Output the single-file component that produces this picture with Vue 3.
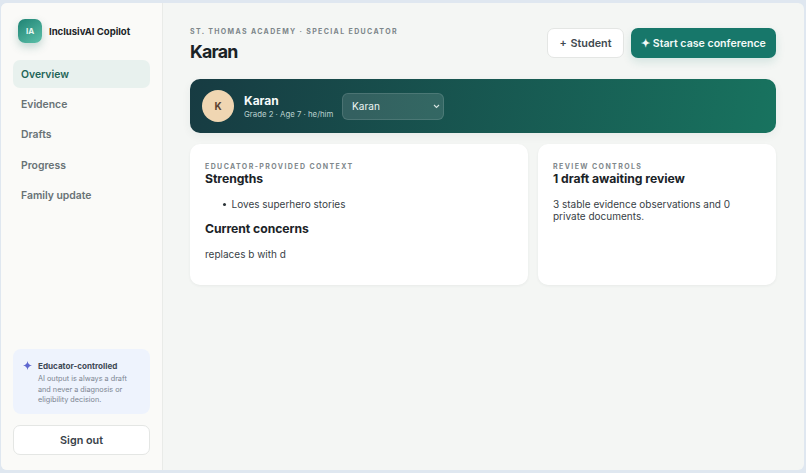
<script setup>
const nav = ['Overview', 'Evidence', 'Drafts', 'Progress', 'Family update']
</script>

<template>
  <div class="frame">
    <aside class="side">
      <div class="brand">
        <div class="logo">IA</div>
        <span class="brand-name">InclusivAI Copilot</span>
      </div>
      <nav class="nav">
        <a v-for="(n, i) in nav" :key="n" class="nav-item" :class="{ active: i === 0 }">{{ n }}</a>
      </nav>
      <div class="note">
        <svg class="note-icon" width="9" height="9" viewBox="0 0 12 12"><path d="M6 0 C6.6 3.6 8.2 5.3 12 6 C8.2 6.7 6.6 8.4 6 12 C5.4 8.4 3.8 6.7 0 6 C3.8 5.3 5.4 3.6 6 0Z" fill="#5f68d0"/></svg>
        <div>
          <div class="note-title">Educator-controlled</div>
          <div class="note-text">AI output is always a draft and never a diagnosis or eligibility decision.</div>
        </div>
      </div>
      <button class="signout">Sign out</button>
    </aside>
    <main class="main">
      <header class="head">
        <div>
          <div class="eyebrow">ST. THOMAS ACADEMY · SPECIAL EDUCATOR</div>
          <h1 class="title">Karan</h1>
        </div>
        <div class="actions">
          <button class="btn-light">+ Student</button>
          <button class="btn-primary">✦ Start case conference</button>
        </div>
      </header>
      <section class="banner">
        <div class="avatar">K</div>
        <div class="who">
          <div class="who-name">Karan</div>
          <div class="who-meta">Grade 2 · Age 7 · he/him</div>
        </div>
        <div class="picker">
          <span>Karan</span>
          <svg width="7" height="5" viewBox="0 0 7 5"><path d="M1 1l2.5 2.5L6 1" fill="none" stroke="#d5e3e0" stroke-width="1.1"/></svg>
        </div>
      </section>
      <section class="cards">
        <article class="card">
          <div class="label">EDUCATOR-PROVIDED CONTEXT</div>
          <h2 class="h">Strengths</h2>
          <ul class="list"><li>Loves superhero stories</li></ul>
          <h2 class="h">Current concerns</h2>
          <p class="p">replaces b with d</p>
        </article>
        <article class="card">
          <div class="label">REVIEW CONTROLS</div>
          <h2 class="h">1 draft awaiting review</h2>
          <p class="p">3 stable evidence observations and 0 private documents.</p>
        </article>
      </section>
    </main>
  </div>
</template>

<style>
html, body { margin: 0; background: #dfe7f0; }
</style>

<style scoped>
.frame {
  box-sizing: border-box;
  width: 803px;
  height: 467px;
  margin: 3px 0 0 1px;
  display: flex;
  border-radius: 6px;
  overflow: hidden;
  background: #f4f6f4;
  font-family: Inter, "Liberation Sans", sans-serif;
  color: #1b2327;
}
.side {
  box-sizing: border-box;
  width: 162px;
  flex: none;
  padding: 16px 12px 15px;
  background: #fafaf8;
  border-right: 1px solid #e9ebe8;
  display: flex;
  flex-direction: column;
}
.brand { display: flex; align-items: center; gap: 7px; padding-left: 5px; }
.logo {
  width: 24px; height: 24px; border-radius: 7px;
  background: linear-gradient(145deg, #1f8374, #5cc0a9);
  color: #e8f7f3;
  font-size: 8px; font-weight: 700;
  display: flex; align-items: center; justify-content: center;
  box-shadow: 0 4px 9px rgba(31, 110, 98, .25);
}
.brand-name { font-size: 9.6px; font-weight: 700; letter-spacing: -.03px; color: #1c2427; }
.nav { margin-top: 17px; display: flex; flex-direction: column; gap: 2.4px; }
.nav-item {
  height: 28px; padding-left: 8px; border-radius: 7px;
  display: flex; align-items: center;
  font-size: 10.4px; font-weight: 600; color: #687276;
}
.nav-item.active { background: #e8f1ee; color: #1f6558; }
.note {
  margin-top: auto;
  box-sizing: border-box;
  height: 65px;
  padding: 11px 17px 0 10px;
  display: flex; gap: 6px;
  border-radius: 8px;
  background: #eef3fd;
}
.note-icon { flex: none; margin-top: 1px; }
.note-title { font-size: 8.1px; font-weight: 700; color: #3f4a56; line-height: 12px; white-space: nowrap; }
.note-text { margin-top: 2px; font-size: 7.28px; line-height: 10.6px; color: #7b8491; }
.signout {
  margin-top: 11px; height: 30px; padding: 0;
  border: 1px solid #e4e6e4; border-radius: 7px; background: #fff;
  font: 600 10.8px Inter, "Liberation Sans", sans-serif; color: #39424a;
}
.main { flex: 1; min-width: 0; padding: 25px 28px 0 27px; }
.head { display: flex; justify-content: space-between; align-items: flex-start; height: 51px; }
.eyebrow { margin-top: -1px; font-size: 7px; font-weight: 700; letter-spacing: 1.36px; color: #7d868a; line-height: 10px; }
.title { margin: 3px 0 0; font-size: 17.8px; line-height: 24px; font-weight: 700; letter-spacing: -.8px; color: #1a2226; }
.actions { display: flex; gap: 7px; }
.btn-light {
  width: 77px; height: 30px; padding: 0;
  border: 1px solid #e4e6e4; border-radius: 7px; background: #fff;
  font: 600 10.8px Inter, "Liberation Sans", sans-serif; word-spacing: 1px; color: #414a50;
}
.btn-primary {
  width: 145px; height: 30px; padding: 0; border: 0; border-radius: 7px;
  background: #17776a; color: #f3faf8;
  font: 600 10.6px Inter, "Liberation Sans", sans-serif;
  box-shadow: 0 4px 10px rgba(23, 119, 106, .14);
}
.banner {
  height: 54px; border-radius: 10px;
  padding: 0 12px;
  display: flex; align-items: center;
  background: linear-gradient(100deg, #173b42, #18735f);
  box-shadow: 0 3px 10px rgba(30, 60, 60, .06);
}
.avatar {
  width: 32px; height: 32px; border-radius: 50%;
  background: #f0d6b2; color: #5d4230;
  font-size: 10px; font-weight: 700;
  display: flex; align-items: center; justify-content: center;
}
.who { margin-left: 10px; width: 98px; }
.who-name { font-size: 12px; line-height: 15px; font-weight: 700; color: #f6faf9; }
.who-meta { font-size: 7.8px; line-height: 11px; margin-top: 1px; color: #b9d0cd; }
.picker {
  box-sizing: border-box;
  width: 102px; height: 27px; padding: 0 3px 0 9px;
  border: 1px solid rgba(255,255,255,.12); border-radius: 6px;
  background: rgba(255,255,255,.12);
  display: flex; align-items: center; justify-content: space-between;
  font-size: 10.1px; color: #eef5f3;
}
.cards { margin-top: 11px; display: grid; grid-template-columns: 338px 238px; gap: 10px; }
.card {
  box-sizing: border-box;
  height: 141px; padding: 18px 15px 0;
  background: #fff; border-radius: 10px;
  box-shadow: 0 1px 3px rgba(30, 50, 50, .06);
}
.label { font-size: 7px; line-height: 9px; font-weight: 700; letter-spacing: 1.4px; color: #7f888c; }
.h { margin: 0; font-size: 12.2px; line-height: 16px; font-weight: 700; color: #1b2327; letter-spacing: -.05px; }
.list { margin: 10px 0 10px; padding: 0; list-style: none; font-size: 10px; line-height: 14px; color: #384146; }
.list li { display: flex; align-items: center; gap: 6px; }
.list li::before { content: ""; width: 3px; height: 3px; margin-left: 17.5px; border-radius: 50%; background: #2b3338; }
.p { margin: 11px 0 0; font-size: 10px; line-height: 12px; color: #384146; }
</style>
